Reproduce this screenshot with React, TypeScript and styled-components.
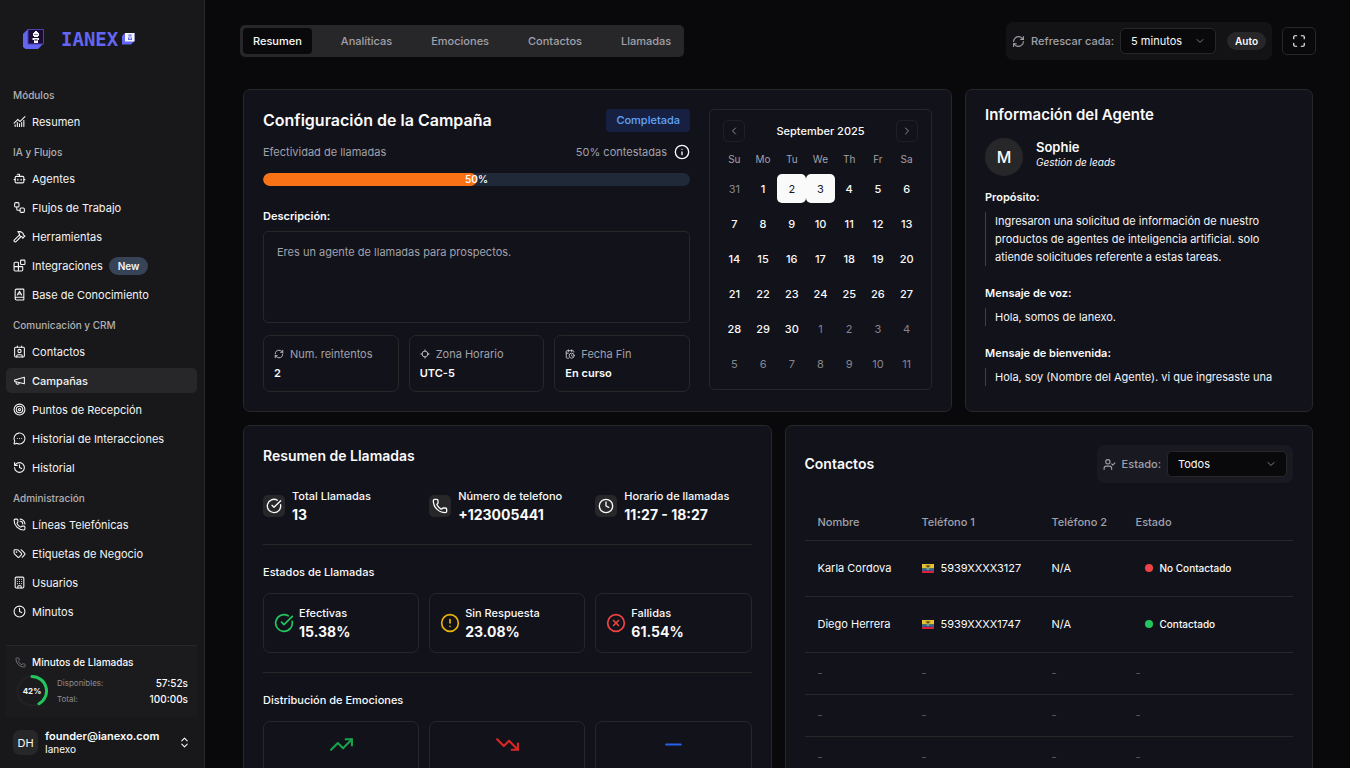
import React from "react";
import styled, { createGlobalStyle, css } from "styled-components";
import {
  Blocks, BookA, Bot, Building, CalendarClock, ChartNoAxesCombined, ChevronDown, ChevronLeft,
  ChevronRight, ChevronsUpDown, CircleAlert, CircleCheckBig, CircleX, Clock, Contact, Hammer,
  History, Info, Locate, Maximize, MessageCircleMore, Minus, Phone, PhoneCall,
  RefreshCw, Target, TrendingDown, TrendingUp, UserCheck, Workflow,
} from "lucide-react";

const c = {
  page: "#09090b",
  side: "#18181b",
  card: "#12121b",
  line: "#27272a",
  text: "#fafafa",
  muted: "#a1a1aa",
};

const GlobalStyle = createGlobalStyle`
  *, *::before, *::after { box-sizing: border-box; }
  body { margin: 0; background: ${c.page}; color: ${c.text}; font-family: Inter, sans-serif; font-size: 11px; line-height: 18px; }
  h1, h2, h3, p, ul, dl, dd { margin: 0; padding: 0; font-size: inherit; }
  ul { list-style: none; }
  button, select { font: inherit; color: inherit; background: none; border: 0; padding: 0; margin: 0; }
  a { color: inherit; text-decoration: none; }
  svg { flex: none; display: block; }
`;

const Shell = styled.div`
  display: flex;
  height: 100vh;
  overflow: hidden;
`;

/* ---------- Sidebar ---------- */

const Sidebar = styled.aside`
  display: flex;
  flex-direction: column;
  flex: none;
  width: 205px;
  background: ${c.side};
  border-right: 1px solid ${c.line};
`;

const Brand = styled.a`
  display: flex;
  align-items: center;
  height: 77px;
  padding-left: 22px;
`;

const Wordmark = styled.span`
  margin: 0 4px 0 16px;
  color: #6366f1;
  font-family: "DejaVu Sans Mono", monospace;
  font-size: 19px;
  font-weight: 700;
`;

const Nav = styled.nav`
  flex: 1;
  min-height: 0;
  overflow: hidden;
  padding: 0 7px 0 6px;
`;

const NavLabel = styled.h2`
  height: 18px;
  padding-left: 7px;
  margin: 9px 0 5px;
  font-size: 10px;
  font-weight: 500;
  color: #b0b0b4;
`;

const NavList = styled.ul`
  display: flex;
  flex-direction: column;
  gap: 4px;
`;

const NavLink = styled.a<{ $active?: boolean }>`
  display: flex;
  align-items: center;
  gap: 6px;
  height: 25px;
  padding: 0 7px;
  border-radius: 5px;
  white-space: nowrap;
  color: #f4f4f5;
  ${(p) => p.$active && css`background: ${c.line}; font-weight: 500;`}
`;

const NewBadge = styled.span`
  padding: 0 9px;
  border-radius: 9px;
  background: #374357;
  font-size: 10px;
  font-weight: 600;
`;

const Minutes = styled.section`
  margin: 0 7px 0 6px;
  height: 72px;
  padding: 7px 9px;
  border-top: 1px solid ${c.line};
  background: #1b1b1d;
`;

const MinutesTitle = styled.h2`
  display: flex;
  align-items: center;
  gap: 6px;
  font-size: 10px;
  font-weight: 500;
  svg { color: #71717a; }
`;

const MinutesBody = styled.div`
  display: flex;
  align-items: center;
  gap: 9px;
  margin-top: 4px;
`;

const RingBox = styled.svg`
  margin-left: 1px;
  text { font: 700 8px Inter, sans-serif; fill: ${c.text}; }
`;

const MinutesList = styled.dl`
  flex: 1;
  font-size: 8px;
  line-height: 16px;
  color: #8b8b93;
  div { display: flex; justify-content: space-between; }
  dd { font-size: 10px; font-weight: 500; color: ${c.text}; }
`;

const Account = styled.button`
  display: flex;
  align-items: center;
  gap: 7px;
  height: 51px;
  padding: 0 13px;
  text-align: left;
  > span:nth-child(2) { flex: 1; }
`;

const AccountAvatar = styled.span`
  display: grid;
  place-items: center;
  width: 25px;
  height: 25px;
  border-radius: 7px;
  background: ${c.line};
`;

const AccountName = styled.span`
  display: block;
  font-weight: 600;
  line-height: 13px;
`;

const AccountOrg = styled.span`
  display: block;
  font-size: 10px;
  line-height: 13px;
`;

/* ---------- Top bar ---------- */

const Main = styled.main`
  flex: 1;
  min-width: 0;
  overflow: hidden;
  padding: 22px 34px 0 35px;
`;

const TopBar = styled.header`
  display: flex;
  align-items: center;
  justify-content: space-between;
`;

const Tabs = styled.div`
  display: flex;
  gap: 19px;
  padding: 3px;
  border-radius: 5px;
  background: ${c.line};
`;

const Tab = styled.button<{ $active?: boolean }>`
  height: 26px;
  padding: 0 10px;
  border-radius: 4px;
  font-weight: 500;
  color: ${c.muted};
  ${(p) => p.$active && css`background: ${c.page}; color: ${c.text};`}
`;

const TopActions = styled.div`
  display: flex;
  align-items: center;
  gap: 10px;
`;

const FilterBox = styled.div<{ $tone: string }>`
  display: flex;
  align-items: center;
  gap: 6px;
  height: 38px;
  padding: 0 6px;
  border-radius: 7px;
  background: ${(p) => p.$tone};
  color: ${c.muted};
  font-weight: 500;
`;

const SelectWrap = styled.span<{ $width: number }>`
  display: grid;
  align-items: center;
  width: ${(p) => p.$width}px;
  > * { grid-area: 1 / 1; }
  svg { justify-self: end; margin-right: 10px; color: #7c7c84; pointer-events: none; }
`;

const Select = styled.select`
  appearance: none;
  width: 100%;
  height: 26px;
  padding: 0 10px;
  border: 1px solid ${c.line};
  border-radius: 5px;
  background: ${c.page};
  color: ${c.text};
  font-weight: 400;
`;

const AutoBadge = styled.span`
  margin-left: 5px;
  padding: 0 8px;
  border-radius: 9px;
  background: ${c.line};
  color: ${c.text};
  font-size: 10px;
  font-weight: 600;
`;

const IconButton = styled.button`
  display: grid;
  place-items: center;
  width: 34px;
  height: 28px;
  border: 1px solid ${c.line};
  border-radius: 5px;
`;

/* ---------- Cards ---------- */

const Board = styled.div`
  display: grid;
  grid-template-columns: repeat(6, minmax(0, 1fr));
  gap: 13px;
  margin: 29px 3px 0;
`;

const Card = styled.section<{ $span: number }>`
  grid-column: span ${(p) => p.$span};
  min-width: 0;
  padding: 19px;
  border: 1px solid ${c.line};
  border-radius: 7px;
  background: ${c.card};
`;

const CampaignCard = styled(Card)`
  display: flex;
  gap: 19px;
`;

const CampaignMain = styled.div`
  flex: 1;
  min-width: 0;
`;

const Split = styled.div`
  display: flex;
  align-items: center;
  justify-content: space-between;
`;

const Title = styled.h1`
  font-size: 16px;
  font-weight: 600;
  line-height: 23px;
`;

const CardTitle = styled.h2`
  font-size: 14px;
  font-weight: 600;
  line-height: 22px;
`;

const StatusBadge = styled.span`
  padding: 0 10px;
  border-radius: 4px;
  background: #172041;
  color: #60a5fa;
  font-weight: 500;
  line-height: 23px;
`;

const EffectRow = styled(Split)`
  margin-top: 11px;
  color: ${c.muted};
  > span:last-child { display: flex; align-items: center; gap: 7px; }
  svg { color: ${c.text}; }
`;

const Track = styled.div`
  display: grid;
  height: 13px;
  margin-top: 12px;
  border-radius: 7px;
  overflow: hidden;
  background: #1f2937;
  > * { grid-area: 1 / 1; }
  span { text-align: center; font-size: 10px; font-weight: 600; line-height: 12px; }
`;

const Fill = styled.div`
  border-radius: 7px;
  background: #f97316;
`;

const FieldLabel = styled.h3`
  margin-top: 21px;
  font-weight: 600;
`;

const Description = styled.p`
  height: 92px;
  margin: 6px 0 12px;
  padding: 11px 13px;
  border: 1px solid ${c.line};
  border-radius: 5px;
  color: ${c.muted};
`;

const Triple = styled.div<{ $top?: number }>`
  display: grid;
  grid-template-columns: repeat(3, minmax(0, 1fr));
  gap: 10px;
  margin-top: ${(p) => p.$top ?? 0}px;
`;

const Fact = styled.div`
  height: 57px;
  padding: 9px 10px;
  border: 1px solid ${c.line};
  border-radius: 7px;
  font-weight: 600;
  div { display: flex; align-items: center; gap: 6px; margin-bottom: 1px; color: ${c.muted}; font-weight: 400; }
  svg { color: #d4d4d8; }
`;

/* ---------- Calendar ---------- */

const CalendarBox = styled.div`
  flex: none;
  align-self: flex-start;
  width: 223px;
  height: 281px;
  padding: 10px;
  border: 1px solid ${c.line};
  border-radius: 5px;
`;

const CalendarHead = styled(Split)`
  padding: 0 3px;
  font-weight: 500;
`;

const CalendarNav = styled.button`
  display: grid;
  place-items: center;
  width: 22px;
  height: 22px;
  border: 1px solid #202024;
  border-radius: 5px;
  color: #8b8b93;
`;

const CalendarTable = styled.table`
  width: 100%;
  margin-top: 8px;
  border-collapse: collapse;
  table-layout: fixed;
  th { height: 17px; padding: 0; font-size: 10px; font-weight: 400; color: ${c.muted}; }
  td { height: 35px; padding: 6px 0 0; }
`;

const Day = styled.button<{ $out?: boolean; $picked?: boolean }>`
  display: block;
  width: 100%;
  height: 29px;
  border-radius: 5px;
  font-weight: 500;
  ${(p) => p.$out && css`color: #85858d; font-weight: 400;`}
  ${(p) => p.$picked && css`background: ${c.text}; color: #18181b; font-weight: 400;`}
`;

/* ---------- Agent ---------- */

const AgentCard = styled(Card)`
  padding-top: 14px;
`;

const AgentTitle = styled.h2`
  font-size: 15px;
  font-weight: 600;
  line-height: 22px;
`;

const AgentHead = styled.div`
  display: flex;
  gap: 13px;
  margin-top: 12px;
`;

const AgentAvatar = styled.span`
  display: grid;
  place-items: center;
  width: 38px;
  height: 38px;
  border-radius: 50%;
  background: ${c.line};
  font-size: 16px;
  font-weight: 500;
`;

const AgentName = styled.div`
  font-size: 13px;
  font-weight: 600;
  em { display: block; font-size: 10px; font-weight: 400; line-height: 13px; }
`;

const AgentField = styled.div<{ $first?: boolean }>`
  margin-top: ${(p) => (p.$first ? 12 : 18)}px;
  h3 { font-weight: 600; }
  p { margin-top: 6px; padding-left: 9px; border-left: 1px solid #3f3f46; color: #f4f4f5; }
`;

/* ---------- Calls ---------- */

const Metric = styled.div<{ $boxed?: boolean }>`
  display: flex;
  align-items: center;
  gap: 7px;
  font-weight: 500;
  strong { display: block; font-size: 14px; font-weight: 700; line-height: 20px; }
  ${(p) => p.$boxed && css`
    gap: 5px;
    height: 60px;
    padding: 0 10px;
    border: 1px solid ${c.line};
    border-radius: 7px;
  `}
`;

const MetricIcon = styled.span`
  display: grid;
  place-items: center;
  width: 22px;
  height: 22px;
  border-radius: 5px;
  background: ${c.line};
`;

const SubTitle = styled.h3`
  margin-top: 19px;
  padding-top: 18px;
  border-top: 1px solid ${c.line};
  font-weight: 500;
`;

const Mood = styled.div`
  display: flex;
  justify-content: center;
  height: 90px;
  padding-top: 10px;
  border: 1px solid ${c.line};
  border-radius: 7px;
`;

/* ---------- Contacts ---------- */

const ContactTable = styled.table`
  width: 100%;
  margin-top: 21px;
  border-collapse: collapse;
  table-layout: fixed;
  tr { border-bottom: 1px solid ${c.line}; }
  th, td { padding: 0 0 0 13px; text-align: left; font-weight: 400; }
  th { height: 36px; color: ${c.muted}; font-weight: 500; }
  th:nth-child(1) { width: 104px; }
  th:nth-child(2) { width: 130px; }
  th:nth-child(3) { width: 84px; }
`;

const ContactRow = styled.tr`
  height: 56px;
`;

const EmptyRow = styled.tr`
  height: 42px;
  color: #5b5b63;
`;

const PhoneCell = styled.span`
  display: flex;
  align-items: center;
  gap: 7px;
`;

const State = styled.span<{ $color: string }>`
  display: flex;
  align-items: center;
  gap: 7px;
  padding-left: 9px;
  font-size: 10px;
  font-weight: 500;
  &::before { content: ""; width: 8px; height: 8px; border-radius: 50%; background: ${(p) => p.$color}; }
`;

/* ---------- Drawings ---------- */

const Cube = () => (
  <svg width="23" height="22" viewBox="0 0 23 22" aria-hidden="true">
    <path d="M1 6 6 1h15.500v14.500L16 21H3.500L1 19z" fill="#6366f1" />
    <path d="M6 1.500h15.500V16H6z" fill="#1c0b35" stroke="#4c3fb0" />
    <path d="M12 4h1V3h2v1h1v1h1v3h-1v1h-4V8h-1V5h1zM10.500 10h6.500v2h-1v3h-4v-3h-1.500z" fill="#f4f4f5" />
    <path d="M12.500 6h1v1h-1zM14.500 6h1v1h-1zM12.500 11.500h3v1h-3z" fill="#1c0b35" />
  </svg>
);

const SmallCube = () => (
  <svg width="13" height="13" viewBox="0 0 13 13" aria-hidden="true">
    <path d="M0 4 3 1h9.500v8L9 12.500H0z" fill="#6366f1" />
    <path d="M3 1h9.500v8.500H3z" fill="#f4f4f5" />
    <path d="M6.500 2.500h3v2h-3zM6 5.500h4V8H6z" fill="#6366f1" />
    <path d="M7.500 3.500h1v.8h-1zM7 6.300h2V7H7z" fill="#f4f4f5" />
  </svg>
);

const Stroke = ({ size = 13, children }: { size?: number; children: React.ReactNode }) => (
  <svg width={size} height={size} viewBox="0 0 24 24" fill="none" stroke="currentColor" strokeWidth="2" strokeLinecap="round" strokeLinejoin="round" aria-hidden="true">
    {children}
  </svg>
);

const MegaphoneIcon = ({ size }: { size?: number }) => (
  <Stroke size={size}>
    <path d="m3 11 18-5v12L3 14v-3z" />
    <path d="M11.600 16.800a3 3 0 1 1-5.800-1.600" />
  </Stroke>
);

const TagsIcon = ({ size }: { size?: number }) => (
  <Stroke size={size}>
    <path d="m15 5 6.300 6.300a2.400 2.400 0 0 1 0 3.400L17 19" />
    <path d="M9.586 5.586A2 2 0 0 0 8.172 5H3a1 1 0 0 0-1 1v5.172a2 2 0 0 0 .586 1.414L8.290 18.290a2.426 2.426 0 0 0 3.420 0l3.580-3.580a2.426 2.426 0 0 0 0-3.420z" />
    <circle cx="6.500" cy="9.500" r=".5" fill="currentColor" />
  </Stroke>
);

const Flag = () => (
  <svg width="12" height="9" viewBox="0 0 12 9" role="img" aria-label="Ecuador">
    <path d="M0 0h12v4.500H0z" fill="#e9c32f" />
    <path d="M0 4.500h12v2.300H0z" fill="#2f6aa8" />
    <path d="M0 6.800h12V9H0z" fill="#d5213a" />
    <path d="M3 1.200 5.300 1.500 6 1l.7.500L9 1.200 7.300 2.500v1.200H4.700V2.500z" fill="#5c4a1c" />
    <circle cx="6" cy="4.400" r="1.400" fill="#7fae74" />
  </svg>
);

const Ring = () => (
  <RingBox width="32" height="32" viewBox="0 0 32 32">
    <circle cx="16" cy="16" r="14.500" fill="none" stroke="#222225" strokeWidth="2" />
    <path d="M16 1.500A14.500 14.500 0 0 1 23 28.700" fill="none" stroke="#22c55e" strokeWidth="3" strokeLinecap="round" />
    <text x="16" y="19" textAnchor="middle">42%</text>
  </RingBox>
);

/* ---------- Data ---------- */

const groups = [
  { label: "Módulos", items: [{ icon: ChartNoAxesCombined, text: "Resumen" }] },
  {
    label: "IA y Flujos",
    items: [
      { icon: Bot, text: "Agentes" },
      { icon: Workflow, text: "Flujos de Trabajo" },
      { icon: Hammer, text: "Herramientas" },
      { icon: Blocks, text: "Integraciones", isNew: true },
      { icon: BookA, text: "Base de Conocimiento" },
    ],
  },
  {
    label: "Comunicación y CRM",
    items: [
      { icon: Contact, text: "Contactos" },
      { icon: MegaphoneIcon, text: "Campañas", active: true },
      { icon: Target, text: "Puntos de Recepción" },
      { icon: MessageCircleMore, text: "Historial de Interacciones" },
      { icon: History, text: "Historial" },
    ],
  },
  {
    label: "Administración",
    items: [
      { icon: PhoneCall, text: "Líneas Telefónicas" },
      { icon: TagsIcon, text: "Etiquetas de Negocio" },
      { icon: Building, text: "Usuarios" },
      { icon: Clock, text: "Minutos" },
    ],
  },
] as { label: string; items: { icon: React.ElementType; text: string; isNew?: boolean; active?: boolean }[] }[];

const weekDays = ["Su", "Mo", "Tu", "We", "Th", "Fr", "Sa"];
const weeks = Array.from({ length: 6 }, (_, w) =>
  weekDays.map((_, d) => {
    const n = w * 7 + d;
    if (n === 0) return { day: 31, out: true };
    return n > 30 ? { day: n - 30, out: true } : { day: n, out: false };
  })
);

const contacts = [
  { name: "Karla Cordova", phone: "5939XXXX3127", state: "No Contactado", color: "#ef4444" },
  { name: "Diego Herrera", phone: "5939XXXX1747", state: "Contactado", color: "#22c55e" },
];

/* ---------- Page ---------- */

export default function App() {
  return (
    <Shell>
      <GlobalStyle />
      <Sidebar>
        <Brand href="#" aria-label="Ianexo">
          <Cube />
          <Wordmark>IANEX</Wordmark>
          <SmallCube />
        </Brand>
        <Nav>
          {groups.map((g) => (
            <React.Fragment key={g.label}>
              <NavLabel>{g.label}</NavLabel>
              <NavList>
                {g.items.map(({ icon: Icon, text, isNew, active }) => (
                  <li key={text}>
                    <NavLink href="#" $active={active}>
                      <Icon size={13} />
                      {text}
                      {isNew && <NewBadge>New</NewBadge>}
                    </NavLink>
                  </li>
                ))}
              </NavList>
            </React.Fragment>
          ))}
        </Nav>
        <Minutes>
          <MinutesTitle><Phone size={11} />Minutos de Llamadas</MinutesTitle>
          <MinutesBody>
            <Ring />
            <MinutesList>
              <div><dt>Disponibles:</dt><dd>57:52s</dd></div>
              <div><dt>Total:</dt><dd>100:00s</dd></div>
            </MinutesList>
          </MinutesBody>
        </Minutes>
        <Account>
          <AccountAvatar>DH</AccountAvatar>
          <span>
            <AccountName>founder@ianexo.com</AccountName>
            <AccountOrg>Ianexo</AccountOrg>
          </span>
          <ChevronsUpDown size={13} />
        </Account>
      </Sidebar>

      <Main>
        <TopBar>
          <Tabs role="tablist">
            {["Resumen", "Analíticas", "Emociones", "Contactos", "Llamadas"].map((t, i) => (
              <Tab key={t} role="tab" aria-selected={i === 0} $active={i === 0}>{t}</Tab>
            ))}
          </Tabs>
          <TopActions>
            <FilterBox $tone="#131315">
              <RefreshCw size={13} />
              <label htmlFor="refresh">Refrescar cada:</label>
              <SelectWrap $width={96}>
                <Select id="refresh"><option>5 minutos</option></Select>
                <ChevronDown size={12} />
              </SelectWrap>
              <AutoBadge>Auto</AutoBadge>
            </FilterBox>
            <IconButton aria-label="Pantalla completa"><Maximize size={14} /></IconButton>
          </TopActions>
        </TopBar>

        <Board>
          <CampaignCard $span={4}>
            <CampaignMain>
              <Split>
                <Title>Configuración de la Campaña</Title>
                <StatusBadge>Completada</StatusBadge>
              </Split>
              <EffectRow>
                <span>Efectividad de llamadas</span>
                <span>50% contestadas <Info size={16} /></span>
              </EffectRow>
              <Track>
                <Fill style={{ width: "50%" }} />
                <span>50%</span>
              </Track>
              <FieldLabel>Descripción:</FieldLabel>
              <Description>Eres un agente de llamadas para prospectos.</Description>
              <Triple>
                <Fact><div><RefreshCw size={10} />Num. reintentos</div>2</Fact>
                <Fact><div><Locate size={10} />Zona Horario</div>UTC-5</Fact>
                <Fact><div><CalendarClock size={10} />Fecha Fin</div>En curso</Fact>
              </Triple>
            </CampaignMain>
            <CalendarBox>
              <CalendarHead>
                <CalendarNav aria-label="Mes anterior"><ChevronLeft size={12} /></CalendarNav>
                September 2025
                <CalendarNav aria-label="Mes siguiente"><ChevronRight size={12} /></CalendarNav>
              </CalendarHead>
              <CalendarTable>
                <thead><tr>{weekDays.map((d) => <th key={d} scope="col">{d}</th>)}</tr></thead>
                <tbody>
                  {weeks.map((w, i) => (
                    <tr key={i}>
                      {w.map(({ day, out }) => (
                        <td key={day}>
                          <Day $out={out} $picked={!out && (day === 2 || day === 3)}>{day}</Day>
                        </td>
                      ))}
                    </tr>
                  ))}
                </tbody>
              </CalendarTable>
            </CalendarBox>
          </CampaignCard>

          <AgentCard $span={2}>
            <AgentTitle>Información del Agente</AgentTitle>
            <AgentHead>
              <AgentAvatar>M</AgentAvatar>
              <AgentName>Sophie<em>Gestión de leads</em></AgentName>
            </AgentHead>
            <AgentField $first>
              <h3>Propósito:</h3>
              <p>Ingresaron una solicitud de información de nuestro productos de agentes de inteligencia artificial. solo atiende solicitudes referente a estas tareas.</p>
            </AgentField>
            <AgentField>
              <h3>Mensaje de voz:</h3>
              <p>Hola, somos de Ianexo.</p>
            </AgentField>
            <AgentField>
              <h3>Mensaje de bienvenida:</h3>
              <p>Hola, soy (Nombre del Agente). vi que ingresaste una</p>
            </AgentField>
          </AgentCard>

          <Card $span={3}>
            <CardTitle>Resumen de Llamadas</CardTitle>
            <Triple $top={20}>
              <Metric>
                <MetricIcon><CircleCheckBig size={16} /></MetricIcon>
                <div>Total Llamadas<strong>13</strong></div>
              </Metric>
              <Metric>
                <MetricIcon><Phone size={16} /></MetricIcon>
                <div>Número de telefono<strong>+123005441</strong></div>
              </Metric>
              <Metric>
                <MetricIcon><Clock size={16} /></MetricIcon>
                <div>Horario de llamadas<strong>11:27 - 18:27</strong></div>
              </Metric>
            </Triple>
            <SubTitle>Estados de Llamadas</SubTitle>
            <Triple $top={12}>
              <Metric $boxed><CircleCheckBig size={20} color="#22c55e" /><div>Efectivas<strong>15.38%</strong></div></Metric>
              <Metric $boxed><CircleAlert size={20} color="#eab308" /><div>Sin Respuesta<strong>23.08%</strong></div></Metric>
              <Metric $boxed><CircleX size={20} color="#ef4444" /><div>Fallidas<strong>61.54%</strong></div></Metric>
            </Triple>
            <SubTitle>Distribución de Emociones</SubTitle>
            <Triple $top={12}>
              <Mood><TrendingUp size={25} color="#16a34a" /></Mood>
              <Mood><TrendingDown size={25} color="#dc2626" /></Mood>
              <Mood><Minus size={25} color="#2563eb" /></Mood>
            </Triple>
          </Card>

          <Card $span={3}>
            <Split>
              <CardTitle>Contactos</CardTitle>
              <FilterBox $tone="#191921">
                <UserCheck size={13} />
                <label htmlFor="state">Estado:</label>
                <SelectWrap $width={120}>
                  <Select id="state"><option>Todos</option></Select>
                  <ChevronDown size={12} />
                </SelectWrap>
              </FilterBox>
            </Split>
            <ContactTable>
              <thead>
                <tr>
                  <th scope="col">Nombre</th>
                  <th scope="col">Teléfono 1</th>
                  <th scope="col">Teléfono 2</th>
                  <th scope="col">Estado</th>
                </tr>
              </thead>
              <tbody>
                {contacts.map((p) => (
                  <ContactRow key={p.name}>
                    <td>{p.name}</td>
                    <td><PhoneCell><Flag />{p.phone}</PhoneCell></td>
                    <td>N/A</td>
                    <td><State $color={p.color}>{p.state}</State></td>
                  </ContactRow>
                ))}
                {[1, 2, 3].map((n) => (
                  <EmptyRow key={n}><td>-</td><td>-</td><td>-</td><td>-</td></EmptyRow>
                ))}
              </tbody>
            </ContactTable>
          </Card>
        </Board>
      </Main>
    </Shell>
  );
}
